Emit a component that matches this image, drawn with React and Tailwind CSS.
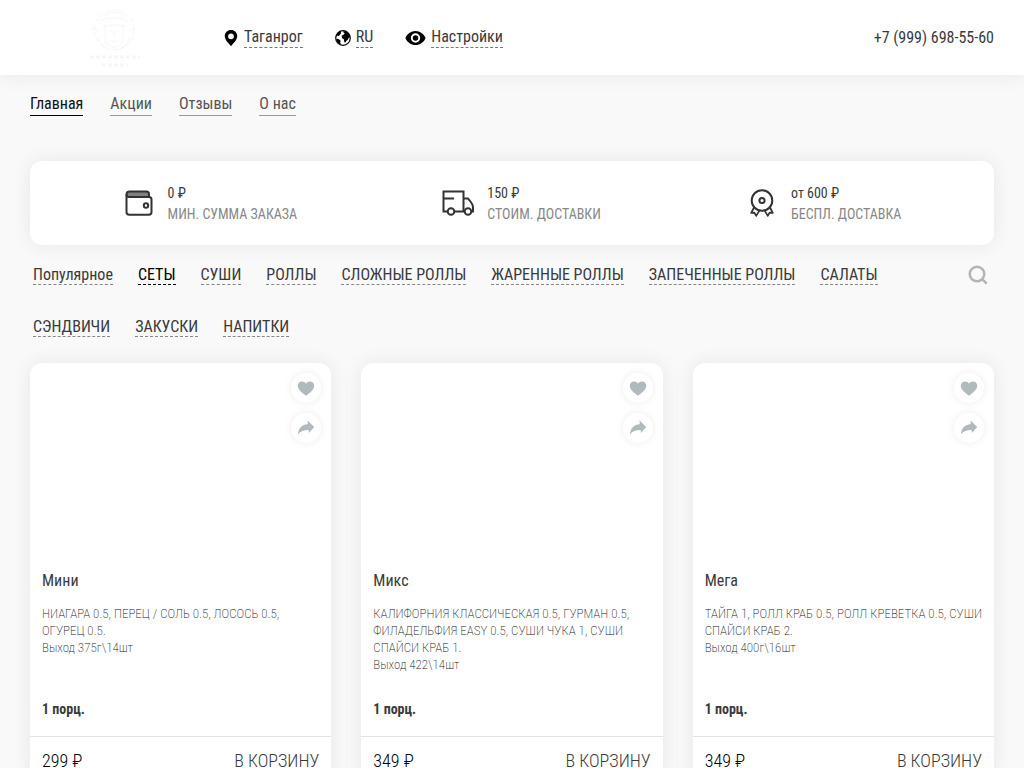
import React from "react";

const contacts = [
  { label: "Таганрог", icon: PinIcon },
  { label: "RU", icon: GlobeIcon },
  { label: "Настройки", icon: EyeIcon },
];

const pages = ["Главная", "Акции", "Отзывы", "О нас"];

const terms = [
  { value: "0 ₽", label: "МИН. СУММА ЗАКАЗА", icon: WalletIcon },
  { value: "150 ₽", label: "СТОИМ. ДОСТАВКИ", icon: TruckIcon },
  { value: "от 600 ₽", label: "БЕСПЛ. ДОСТАВКА", icon: AwardIcon },
];

const categories = [
  "Популярное",
  "СЕТЫ",
  "СУШИ",
  "РОЛЛЫ",
  "СЛОЖНЫЕ РОЛЛЫ",
  "ЖАРЕННЫЕ РОЛЛЫ",
  "ЗАПЕЧЕННЫЕ РОЛЛЫ",
  "САЛАТЫ",
  "СЭНДВИЧИ",
  "ЗАКУСКИ",
  "НАПИТКИ",
];

const products = [
  {
    name: "Мини",
    text: "НИАГАРА 0.5, ПЕРЕЦ / СОЛЬ 0.5, ЛОСОСЬ 0.5, ОГУРЕЦ 0.5.",
    output: "Выход 375г\\14шт",
    price: "299 ₽",
  },
  {
    name: "Микс",
    text: "КАЛИФОРНИЯ КЛАССИЧЕСКАЯ 0.5, ГУРМАН 0.5, ФИЛАДЕЛЬФИЯ EASY 0.5, СУШИ ЧУКА 1, СУШИ СПАЙСИ КРАБ 1.",
    output: "Выход 422\\14шт",
    price: "349 ₽",
  },
  {
    name: "Мега",
    text: "ТАЙГА 1, РОЛЛ КРАБ 0.5, РОЛЛ КРЕВЕТКА 0.5, СУШИ СПАЙСИ КРАБ 2.",
    output: "Выход 400г\\16шт",
    price: "349 ₽",
  },
];

function PinIcon() {
  return (
    <svg width="15" height="18" viewBox="0 0 15 18" aria-hidden="true">
      <path
        fill="#000"
        fillRule="evenodd"
        d="M7 1C3.4 1 .8 3.7.8 7.1c0 4 3.6 7 6.2 10.2 2.600-3.200 6.200-6.200 6.200-10.200C13.200 3.700 10.600 1 7 1Zm0 3.400a2.900 2.900 0 1 1 0 5.800 2.900 2.900 0 0 1 0-5.800Z"
      />
    </svg>
  );
}

function GlobeIcon() {
  return (
    <svg width="16" height="16" viewBox="0 0 16 16" aria-hidden="true">
      <circle cx="8" cy="8" r="7.300" fill="#fff" stroke="#000" strokeWidth="1.200" />
      <path
        fill="#000"
        d="M5.800.9C3.300 1.700 1.200 3.700.8 6.500L1 9.500l1.200-.8 1.800.6 1.600 1.500-.4 1.600.8 2.300L4.200 14 1.500 11 .8 8.500l.5-3 2.700.6 1.300-2.200.8-.6ZM8.500 1l3.300.8 2.400 2.200 1 3-1.500 1-.9 1.800-1.600 1.200-.5 1.500-1.300-.2-.6-3-1.900-1.300-.2-2.200 2-1.300 1-1.300-1.500-.9Z"
      />
    </svg>
  );
}

function EyeIcon() {
  return (
    <svg width="21" height="16" viewBox="0 0 22 16" aria-hidden="true">
      <path
        fill="#000"
        fillRule="evenodd"
        d="M11 .6C6.200.6 2.200 3.600.4 8c1.800 4.400 5.800 7.400 10.600 7.400s8.800-3 10.600-7.400C19.800 3.600 15.800.6 11 .6Zm0 2.500a4.900 4.900 0 1 1 0 9.800 4.900 4.900 0 0 1 0-9.800Zm0 2a2.900 2.900 0 1 0 0 5.800 2.900 2.900 0 0 0 0-5.800Z"
      />
    </svg>
  );
}

function WalletIcon() {
  return (
    <svg width="28" height="26" viewBox="0 0 28 26" fill="none" stroke="#333" strokeWidth="2" strokeLinejoin="round" aria-hidden="true">
      <path fill="#808080" d="M1.500 4.500c0-2 1-3 3-3h17c1.500 0 2.500 1 2.500 2.500v3H4c-1.500 0-2.500-1-2.500-2.500Z" />
      <path d="M1.500 4.500V22c0 1.800 1 2.800 2.800 2.800h19.400c1.800 0 2.800-1 2.800-2.800V9.500C26.500 8 25.700 7 24.200 7H4" />
      <circle cx="21" cy="15.500" r="2.200" />
    </svg>
  );
}

function TruckIcon() {
  return (
    <svg width="32" height="26" viewBox="0 0 32 26" fill="none" stroke="#333" strokeWidth="2" aria-hidden="true">
      <path d="M5 21.500H1.500v-20h20v20h-9M21.500 8.500h4.500l3.500 4.500c1 1.500 1.500 2.500 1.500 4.500v4h-1.500M1.500 8.500H12M21.500 21.500h1" />
      <circle cx="9" cy="21.500" r="3.300" />
      <circle cx="26" cy="21.500" r="3.300" />
    </svg>
  );
}

function AwardIcon() {
  return (
    <svg width="24" height="28" viewBox="0 0 24 28" fill="none" stroke="#333" strokeWidth="2" strokeLinejoin="round" aria-hidden="true">
      <circle cx="12" cy="11.500" r="10.300" />
      <circle cx="12" cy="11.500" r="2.600" />
      <path strokeWidth="1.700" d="M4 18.500 1.200 24l3.200-.3 1.800 3.200 3.300-5.500M20 18.500l2.800 5.500-3.200-.3-1.800 3.200-3.300-5.500" />
    </svg>
  );
}

function HeartIcon() {
  return (
    <svg width="18" height="16" viewBox="0 0 18 16" aria-hidden="true">
      <path
        fill="#b0b9bc"
        d="M9 15.700C5.500 12.800.8 9.900.8 5.700.8 3.200 2.600 1.500 4.900 1.500 6.700 1.500 8.200 2.400 9 3.800 9.800 2.400 11.300 1.500 13.100 1.500c2.300 0 4.100 1.700 4.100 4.200 0 4.200-4.700 7.100-8.200 10Z"
      />
    </svg>
  );
}

function ShareIcon() {
  return (
    <svg width="18" height="16" viewBox="0 0 18 16" aria-hidden="true">
      <path fill="#b0b9bc" d="M10.500 .5 17.200 7 11.800 13v-3.100C7.500 9.800 3.500 10.800 1 14.200 1.300 8.300 5 4.300 10.800 4.200Z" />
    </svg>
  );
}

function Logo() {
  return (
    <svg width="56" height="62" viewBox="0 0 56 62" fill="none" stroke="#f6f6f6" role="img" aria-label="Доставка">
      <circle cx="28" cy="23" r="20" strokeDasharray="5 2" />
      <path d="M18 9c6-5 14-5 20 0M14 14c8-4 20-4 28 0M17 20c7-3 15-3 22 0M19 18v14c0 5 4 8 9 8s9-3 9-8V18M23 24h4M30 24h4M28 24v6M24 34h8M5 21l8 3M51 21l-8 3M12 30c2 6 5 9 9 11M44 30c-2 6-5 9-9 11" />
      <path strokeWidth="3" strokeDasharray="4 2" d="M4 50h50M16 58h26" />
    </svg>
  );
}

function ProductCard({ name, text, output, price }) {
  return (
    <article className="relative flex flex-col rounded-xl bg-white shadow-[0_0_20px_rgba(0,0,0,0.08)]">
      <div className="h-[206px]" />
      <div className="absolute top-[10px] right-[10px] flex flex-col gap-[10px]">
        <button type="button" aria-label="В избранное" className="flex size-[30px] items-center justify-center rounded-full bg-white shadow-[0_0_8px_rgba(0,0,0,0.08)]">
          <HeartIcon />
        </button>
        <button type="button" aria-label="Поделиться" className="flex size-[30px] items-center justify-center rounded-full bg-white shadow-[0_0_8px_rgba(0,0,0,0.08)]">
          <ShareIcon />
        </button>
      </div>
      <div className="pr-2 pl-3">
        <h2 className="text-base leading-6">{name}</h2>
        <div className="mt-3 min-h-[94px] text-[13px] leading-[17px] font-extralight text-[#222]">
          <p>{text}</p>
          <p>{output}</p>
        </div>
        <p className="pb-[17px] text-sm leading-5 font-bold">1 порц.</p>
      </div>
      <div className="flex items-center justify-between border-t border-[#e3e3e3] px-3 py-3 text-lg leading-6 font-[350]">
        <span className="text-black">{price}</span>
        <button type="button">В КОРЗИНУ</button>
      </div>
    </article>
  );
}

export default function App() {
  return (
    <div className="min-h-screen bg-[#f9f9f9] font-['Roboto_Condensed','Liberation_Sans_Narrow',Roboto,sans-serif] text-base text-[#3a3a3a]">
      <header className="flex h-[75px] items-center bg-white px-[30px] shadow-[0_0_20px_rgba(0,0,0,0.08)]">
        <a href="#" className="mr-[54px] flex w-[140px] justify-center pl-7">
          <Logo />
        </a>
        <div className="flex items-center gap-8">
          {contacts.map(({ label, icon: Icon }) => (
            <button key={label} type="button" className="flex items-center gap-[5px]">
              <Icon />
              <span className="mb-0.5 border-b border-dashed border-[#777] leading-[21px]">{label}</span>
            </button>
          ))}
        </div>
        <a href="tel:+79996985560" className="ml-auto">+7 (999) 698-55-60</a>
      </header>

      <main className="px-[30px] pb-8">
        <nav className="flex gap-[27px] pt-[18px]">
          {pages.map((page, i) => (
            <a
              key={page}
              href="#"
              className={i === 0 ? "border-b border-black leading-[22px] text-[#111]" : "border-b border-[#999] leading-[22px] text-[#555]"}
            >
              {page}
            </a>
          ))}
        </nav>

        <section className="mt-[45px] flex h-[84px] items-center justify-around rounded-xl bg-white px-5 shadow-[0_0_20px_rgba(0,0,0,0.08)]">
          {terms.map(({ value, label, icon: Icon }) => (
            <div key={label} className="flex items-center gap-[13px]">
              <div className="flex w-8 justify-center">
                <Icon />
              </div>
              <div className="pt-0.5 text-sm leading-[21px]">
                <p>{value}</p>
                <p className="text-[#888]">{label}</p>
              </div>
            </div>
          ))}
        </section>

        <div className="mt-[18px] flex items-start justify-between pl-[3px]">
          <nav className="flex flex-wrap gap-x-[25px] gap-y-[30px]">
            {categories.map((category, i) => (
              <a
                key={category}
                href="#"
                className={i === 1 ? "border-b border-dashed border-black pt-0.5 leading-[19px] text-black" : "border-b border-dashed border-[#888] pt-0.5 leading-[19px]"}
              >
                {category}
              </a>
            ))}
          </nav>
          <button type="button" aria-label="Поиск" className="mt-0.5 mr-[6px] ml-10 shrink-0">
            <svg width="20" height="20" viewBox="0 0 20 20" fill="none" stroke="#b5b5b5" strokeWidth="2.500" aria-hidden="true">
              <circle cx="9" cy="9" r="7.300" />
              <path d="m14.200 14.200 4.500 4.500" />
            </svg>
          </button>
        </div>

        <div className="mt-[26px] grid grid-cols-3 gap-[30px]">
          {products.map((product) => (
            <ProductCard key={product.name} {...product} />
          ))}
        </div>
      </main>
    </div>
  );
}
